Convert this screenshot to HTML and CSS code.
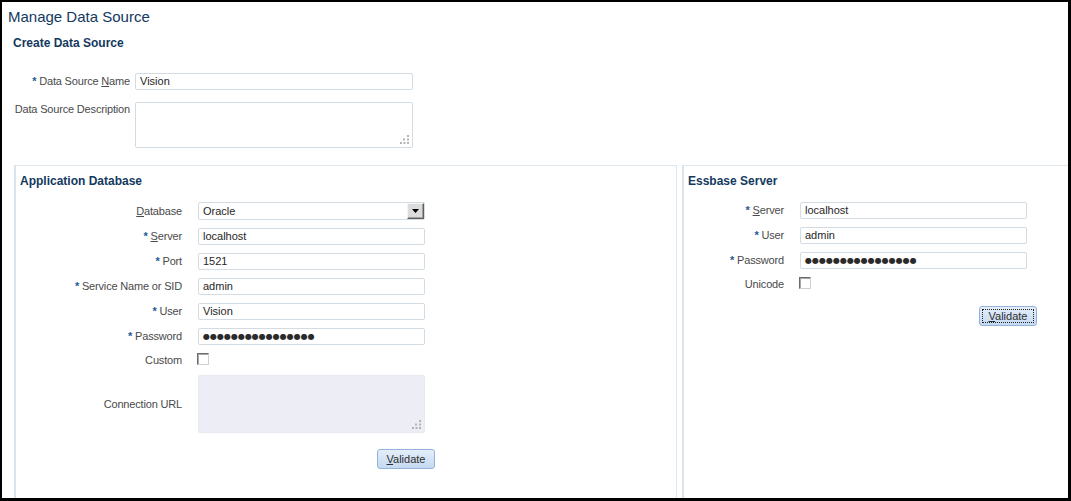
FILE: index.html
```html
<!DOCTYPE html>
<html lang="en">
<head>
    <meta charset="UTF-8">
    <title>Manage Data Source</title>
    <link rel="stylesheet" href="styles.css">
</head>
<body>
    <div class="frame">
        <h1 class="page-title">Manage Data Source</h1>
        <h2 class="section-title">Create Data Source</h2>

        <!-- Data source name / description -->
        <div class="form form-top">
            <label class="label"><span class="req">*</span> Data Source <u>N</u>ame</label>
            <div class="field">Vision</div>
            <label class="label label-top">Data Source Description</label>
            <div class="field field-area">
                <svg class="grip" width="9" height="9" viewBox="0 0 9 9"><rect x="7" y="0" width="2" height="2"/><rect x="3" y="3.5" width="2" height="2"/><rect x="7" y="3.5" width="2" height="2"/><rect x="0" y="7" width="2" height="2"/><rect x="3.5" y="7" width="2" height="2"/><rect x="7" y="7" width="2" height="2"/></svg>
            </div>
        </div>

        <div class="panels">
            <!-- Application Database -->
            <section class="panel panel-app">
                <h3 class="panel-title">Application Database</h3>
                <div class="form form-app">
                    <label class="label"><u>D</u>atabase</label>
                    <div class="field field-select">
                        <span>Oracle</span>
                        <span class="drop"><svg width="7" height="4" viewBox="0 0 7 4"><path d="M0 0h7L3.5 4z"/></svg></span>
                    </div>
                    <label class="label"><span class="req">*</span> <u>S</u>erver</label>
                    <div class="field">localhost</div>
                    <label class="label"><span class="req">*</span> Port</label>
                    <div class="field">1521</div>
                    <label class="label"><span class="req">*</span> Service Name or SID</label>
                    <div class="field">admin</div>
                    <label class="label"><span class="req">*</span> User</label>
                    <div class="field">Vision</div>
                    <label class="label"><span class="req">*</span> Password</label>
                    <div class="field field-pass">●●●●●●●●●●●●●●●●</div>
                    <label class="label label-check">Custom</label>
                    <div class="check-cell"><span class="checkbox"></span></div>
                    <label class="label">Connection URL</label>
                    <div class="field field-url">
                        <svg class="grip" width="9" height="9" viewBox="0 0 9 9"><rect x="7" y="0" width="2" height="2"/><rect x="3" y="3.5" width="2" height="2"/><rect x="7" y="3.5" width="2" height="2"/><rect x="0" y="7" width="2" height="2"/><rect x="3.5" y="7" width="2" height="2"/><rect x="7" y="7" width="2" height="2"/></svg>
                    </div>
                    <div class="button-cell button-cell-app">
                        <button class="btn"><u>V</u>alidate</button>
                    </div>
                </div>
            </section>

            <!-- Essbase Server -->
            <section class="panel panel-ess">
                <h3 class="panel-title">Essbase Server</h3>
                <div class="form form-ess">
                    <label class="label"><span class="req">*</span> <u>S</u>erver</label>
                    <div class="field">localhost</div>
                    <label class="label"><span class="req">*</span> User</label>
                    <div class="field">admin</div>
                    <label class="label"><span class="req">*</span> Password</label>
                    <div class="field field-pass">●●●●●●●●●●●●●●●●</div>
                    <label class="label label-check">Unicode</label>
                    <div class="check-cell"><span class="checkbox"></span></div>
                    <div class="button-cell button-cell-ess">
                        <button class="btn btn-focus"><u>V</u>alidate</button>
                    </div>
                </div>
            </section>
        </div>
    </div>
</body>
</html>
```

FILE: styles.css
```css
/* General */
body {
    margin: 0;
    background-color: #fff;
    font-family: "Liberation Sans", Arial, sans-serif;
    font-size: 11px;
    color: #4a4a4a;
}

.frame {
    box-sizing: border-box;
    width: 1071px;
    height: 501px;
    border: 2px solid #000;
    border-right-width: 3px;
    border-bottom-width: 3px;
    overflow: hidden;
    background-color: #fff;
}

/* Headings */
.page-title {
    margin: 6px 0 0 6px;
    font-size: 15px;
    line-height: 18px;
    font-weight: normal;
    color: #13395e;
}

.section-title {
    margin: 10px 0 0 11px;
    font-size: 12px;
    line-height: 14px;
    font-weight: bold;
    color: #13395e;
}

.panel-title {
    margin: 0;
    font-size: 12px;
    line-height: 14px;
    font-weight: bold;
    color: #13395e;
}

/* Forms */
.form {
    display: grid;
    align-items: center;
    row-gap: 8px;
}

.form-top {
    grid-template-columns: 128px 278px;
    column-gap: 5px;
    row-gap: 12px;
    margin-top: 23px;
}

.form-app {
    grid-template-columns: 162px 227px;
    column-gap: 16px;
    margin-top: 14px;
}

.form-ess {
    grid-template-columns: 96px 227px;
    column-gap: 16px;
    margin-top: 14px;
}

.label {
    text-align: right;
    line-height: 17px;
    letter-spacing: -0.17px;
    white-space: nowrap;
}

.label-top {
    align-self: start;
    line-height: 13px;
    padding-top: 1px;
}

.label-check {
    line-height: 12px;
}

.req {
    color: #1d5a96;
    font-weight: bold;
}

.field {
    position: relative;
    box-sizing: border-box;
    height: 17px;
    padding: 0 4px;
    border: 1px solid #d3dbe3;
    border-radius: 2px;
    background-color: #fff;
    color: #262626;
    line-height: 15px;
    white-space: nowrap;
}

.field-area {
    height: 46px;
}

.field-url {
    height: 58px;
    border-color: #e8e8f0;
    background-color: #ededf5;
}

.grip {
    position: absolute;
    right: 3px;
    bottom: 3px;
    fill: #b4b4b4;
}

.field-select {
    display: flex;
    justify-content: space-between;
    align-items: center;
    height: 18px;
    padding-right: 0;
}

.drop {
    display: flex;
    justify-content: center;
    align-items: center;
    box-sizing: border-box;
    width: 17px;
    height: 16px;
    background-color: #dcdcdc;
    border: 1px solid;
    border-color: #f4f4f4 #5e5e5e #5e5e5e #f4f4f4;
    box-shadow: inset -1px -1px 0 #a0a0a0;
}

.drop svg {
    fill: #000;
}

.field-pass {
    font-family: "DejaVu Sans", sans-serif;
    font-size: 8px;
    letter-spacing: 0;
    color: #2a2a2a;
}

.check-cell {
    height: 14px;
    align-self: start;
}

.checkbox {
    display: block;
    box-sizing: border-box;
    width: 12px;
    height: 12px;
    margin-left: -1px;
    border: 1px solid;
    border-color: #6a6a6a #d0d0d0 #d0d0d0 #6a6a6a;
    box-shadow: inset 1px 1px 0 #a8a8a8;
    background-color: #fff;
}

/* Buttons */
.button-cell {
    grid-column: 2;
    display: flex;
    justify-content: flex-end;
    margin-right: -10px;
}

.button-cell-app {
    margin-top: 8px;
}

.button-cell-ess {
    margin-top: 7px;
}

.btn {
    box-sizing: border-box;
    width: 58px;
    height: 20px;
    padding: 0;
    border: 1px solid #94b3d8;
    border-radius: 3px;
    background: linear-gradient(#e4eefa, #c4d9f2);
    font-family: "Liberation Sans", Arial, sans-serif;
    font-size: 11px;
    color: #2e2e2e;
}

.btn-focus {
    outline: 1px dotted #222;
    outline-offset: -4px;
}

/* Panels */
.panels {
    display: flex;
    gap: 5px;
    margin-top: 17px;
    padding-left: 12px;
}

.panel {
    box-sizing: border-box;
    height: 360px;
    padding: 8px 0 0 4px;
    border: 1px solid #dfe6ed;
    border-left: 2px solid #dae2ea;
}

.panel-app {
    width: 663px;
    flex: none;
}

.panel-ess {
    flex: 1;
    margin-right: -20px;
}
```
